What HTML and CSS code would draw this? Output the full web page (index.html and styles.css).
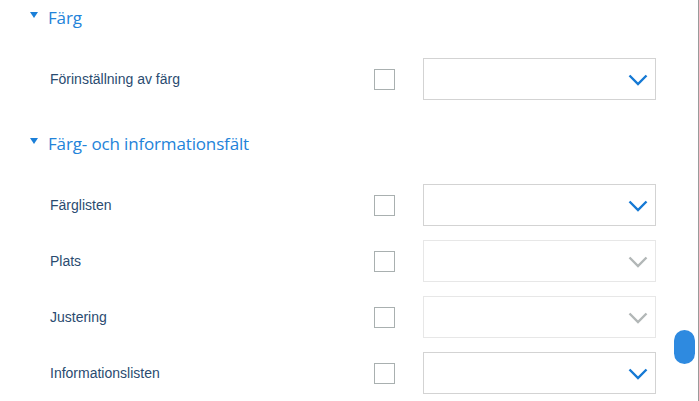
FILE: index.html
```html
<!DOCTYPE html>
<html lang="sv">
<head>
<meta charset="utf-8">
<title>Färg</title>
<link rel="stylesheet" href="styles.css">
</head>
<body>
<div class="page">
  <div class="heading first"><span class="tri"></span><span class="htext">Färg</span></div>
  <div class="row">
    <span class="label">Förinställning av färg</span>
    <span class="check"></span>
    <div class="select"><svg class="chev" width="20" height="12" viewBox="0 0 20 12"><polyline points="1.5,1.5 10,10 18.5,1.5"/></svg></div>
  </div>
  <div class="heading"><span class="tri"></span><span class="htext">Färg- och informationsfält</span></div>
  <div class="row">
    <span class="label">Färglisten</span>
    <span class="check"></span>
    <div class="select"><svg class="chev" width="20" height="12" viewBox="0 0 20 12"><polyline points="1.5,1.5 10,10 18.5,1.5"/></svg></div>
  </div>
  <div class="row">
    <span class="label">Plats</span>
    <span class="check"></span>
    <div class="select disabled"><svg class="chev" width="20" height="12" viewBox="0 0 20 12"><polyline points="1.5,1.5 10,10 18.5,1.5"/></svg></div>
  </div>
  <div class="row">
    <span class="label">Justering</span>
    <span class="check"></span>
    <div class="select disabled"><svg class="chev" width="20" height="12" viewBox="0 0 20 12"><polyline points="1.5,1.5 10,10 18.5,1.5"/></svg></div>
  </div>
  <div class="row">
    <span class="label">Informationslisten</span>
    <span class="check"></span>
    <div class="select"><svg class="chev" width="20" height="12" viewBox="0 0 20 12"><polyline points="1.5,1.5 10,10 18.5,1.5"/></svg></div>
  </div>
  <div class="thumb"></div>
</div>
</body>
</html>
```
FILE: styles.css
```css
html, body {
  margin: 0;
  padding: 0;
  background: #ffffff;
}
.page {
  position: relative;
  width: 699px;
  height: 401px;
  box-sizing: border-box;
  border-right: 1px solid #9a9a9a;
  overflow: hidden;
  display: flex;
  flex-direction: column;
  font-family: "Liberation Sans", Arial, sans-serif;
}
.heading {
  display: flex;
  align-items: center;
  height: 34px;
  flex: 0 0 34px;
  padding-left: 30px;
  margin-top: 19px;
  margin-bottom: 17px;
}
.heading.first {
  margin-top: 0;
}
.tri {
  width: 0;
  height: 0;
  border-left: 4.5px solid transparent;
  border-right: 4.5px solid transparent;
  border-top: 6px solid #1b7fd8;
  margin-right: 10px;
  margin-top: -5px;
}
.htext {
  font-family: "Open Sans", "Noto Sans", sans-serif;
  font-size: 17px;
  color: #2383d9;
  letter-spacing: -0.15px;
}
.row {
  display: flex;
  align-items: center;
  height: 56px;
  flex: 0 0 56px;
}
.label {
  width: 324px;
  padding-left: 50px;
  font-size: 14px;
  color: #2a4b70;
}
.check {
  width: 21px;
  height: 21px;
  box-sizing: border-box;
  border: 1px solid #a9b0b0;
  margin-top: 1px;
}
.select {
  margin-left: 28px;
  width: 233px;
  height: 42px;
  box-sizing: border-box;
  border: 1px solid #d3d3d3;
  display: flex;
  align-items: center;
  justify-content: flex-end;
  padding-right: 7px;
}
.select.disabled {
  border-color: #e7e7e7;
}
.chev {
  margin-top: 1px;
}
.chev polyline {
  fill: none;
  stroke: #1579d4;
  stroke-width: 2.4;
}
.select.disabled .chev polyline {
  stroke: #b2b7b7;
}
.thumb {
  position: absolute;
  left: 674px;
  top: 330px;
  width: 21px;
  height: 34px;
  border-radius: 10.5px;
  background: #2e8ae0;
}
```
